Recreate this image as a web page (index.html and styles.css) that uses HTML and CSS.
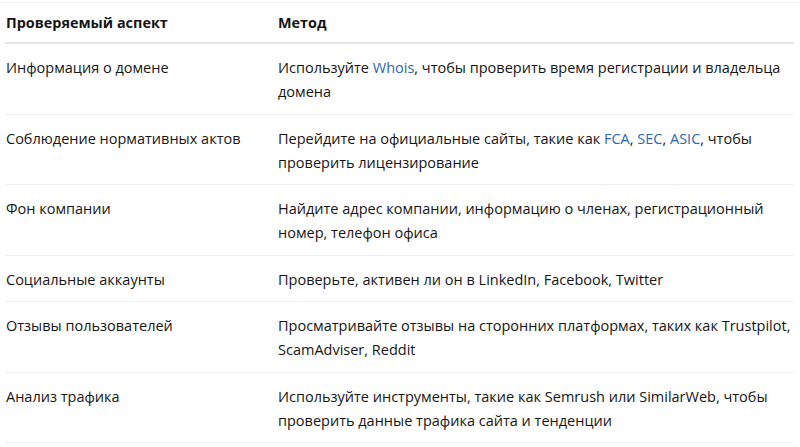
FILE: index.html
```html
<!DOCTYPE html>
<html lang="ru">
<head>
<meta charset="utf-8">
<link rel="stylesheet" href="styles.css">
</head>
<body>
<div class="topline"></div>
<table class="tbl">
  <thead>
    <tr><th class="c1">Проверяемый аспект</th><th>Метод</th></tr>
  </thead>
  <tbody>
    <tr><td class="c1">Информация о домене</td><td>Используйте <a href="#">Whois</a>, чтобы проверить время регистрации и владельца домена</td></tr>
    <tr><td class="c1">Соблюдение нормативных актов</td><td>Перейдите на официальные сайты, такие как <a href="#">FCA</a>, <a href="#">SEC</a>, <a href="#">ASIC</a>, чтобы проверить лицензирование</td></tr>
    <tr><td class="c1">Фон компании</td><td>Найдите адрес компании, информацию о членах, регистрационный номер, телефон офиса</td></tr>
    <tr><td class="c1">Социальные аккаунты</td><td>Проверьте, активен ли он в LinkedIn, Facebook, Twitter</td></tr>
    <tr><td class="c1">Отзывы пользователей</td><td>Просматривайте отзывы на сторонних платформах, таких как Trustpilot, ScamAdviser, Reddit</td></tr>
    <tr><td class="c1">Анализ трафика</td><td>Используйте инструменты, такие как Semrush или SimilarWeb, чтобы проверить данные трафика сайта и тенденции</td></tr>
  </tbody>
</table>
</body>
</html>
```
FILE: styles.css
```css
html, body {
  margin: 0;
  padding: 0;
  background: #ffffff;
}
body {
  font-family: "Open Sans", "Noto Sans", sans-serif;
  font-size: 14.5px;
  color: #151515;
}
.topline {
  height: 2px;
  border-bottom: 1px solid #f2f2f2;
}
.tbl {
  margin-left: 5px;
  width: 789px;
  border-collapse: collapse;
}
.tbl th, .tbl td {
  text-align: left;
  vertical-align: top;
  line-height: 24px;
  padding: 12px 0 9.5px 1px;
}
.tbl th {
  font-size: 14.4px;
  font-weight: 700;
  padding-top: 8px;
  padding-bottom: 7px;
  border-bottom: 2px solid #e6e6e6;
}
.tbl td {
  border-bottom: 1px solid #efefef;
}
.tbl .c1 {
  width: 271px;
}
.tbl a {
  color: #2f66b3;
  text-decoration: none;
}
```
